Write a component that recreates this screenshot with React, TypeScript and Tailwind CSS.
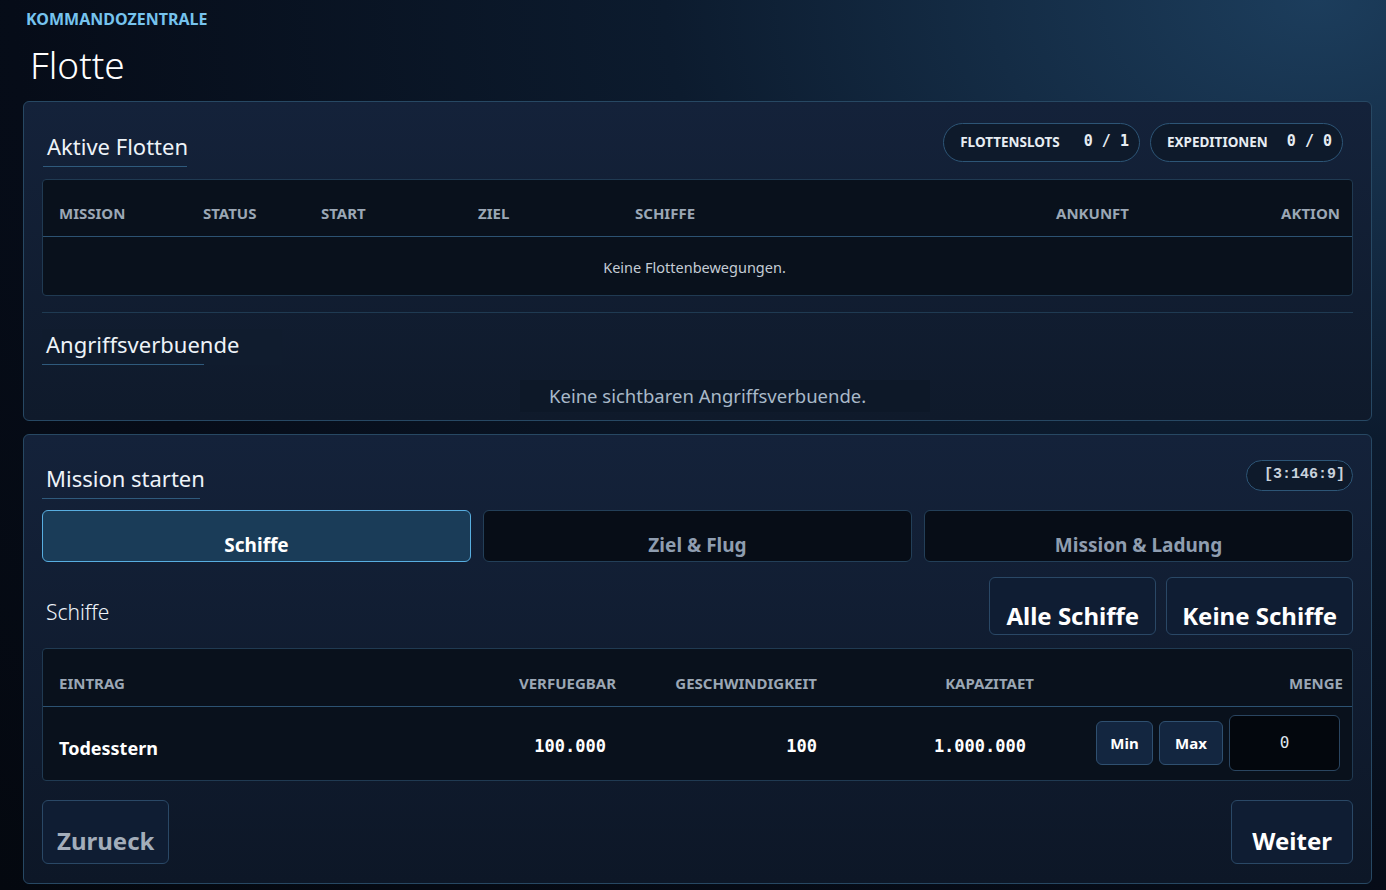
import React from "react";

const sans = "font-['Noto_Sans','Open_Sans',sans-serif]";
const mono = "font-['DejaVu_Sans_Mono','Liberation_Mono',monospace]";

const fleetCols = [
  { label: "MISSION", w: "w-[144px]" },
  { label: "STATUS", w: "w-[118px]" },
  { label: "START", w: "w-[157px]" },
  { label: "ZIEL", w: "w-[157px]" },
  { label: "SCHIFFE", w: "w-[421px]" },
  { label: "ANKUNFT", w: "flex-1" },
];

const SectionTitle = ({ children, line }: { children: React.ReactNode; line: string }) => (
  <div className="inline-block">
    <h2 className="px-1 text-[22px] leading-[30px] text-[#eef3f8]">{children}</h2>
    <div className={`mt-[5px] h-px bg-[#2f5a7c] ${line}`} />
  </div>
);

const Pill = ({ label, value, gap }: { label: string; value: string; gap: string }) => (
  <div className={`flex h-[39px] items-center rounded-full border border-[#2d5576] bg-[#0e1a2b] pl-[16px] pr-[10px] ${gap}`}>
    <span className="text-[13.5px] font-bold text-[#e7edf3]">{label}</span>
    <span className={`${mono} pb-[2px] text-[15px] font-bold text-[#e7edf3]`}>{value}</span>
  </div>
);

export default function App() {
  return (
    <div
      className={`${sans} min-h-screen w-full bg-[radial-gradient(ellipse_at_95%_0%,#1c3d5c_0%,#0c1b2e_35%,#060c18_70%,#04080f_100%)] pb-[6px] pl-[23px] pr-[14px] pt-[9px]`}
    >
      <div className="pl-[3px] text-[16px] font-bold leading-[20px] text-[#76c3ee]">KOMMANDOZENTRALE</div>
      <h1 className="pl-[7px] pt-[14px] text-[37px] font-light leading-[44px] text-white">Flotte</h1>

      <section className="mt-[14px] rounded-md border border-[#274863] bg-[linear-gradient(180deg,#14223a,#0f1a2b)] px-[18px] pb-[8px] pt-[21px]">
        <div className="flex items-start justify-between pl-[1px]">
          <div className="pt-[8px]">
            <SectionTitle line="w-[144px]">Aktive Flotten</SectionTitle>
          </div>
          <div className="flex gap-[10px] pr-[10px]">
            <Pill label="FLOTTENSLOTS" value="0 / 1" gap="gap-[24px]" />
            <Pill label="EXPEDITIONEN" value="0 / 0" gap="gap-[19px]" />
          </div>
        </div>

        <div className="mt-[12px] rounded-sm border border-[#203a52] bg-[#09111c]">
          <div className="flex h-[57px] items-center border-b border-[#2c5272] pl-[16px] pr-[12px] pt-[11px] text-[15px] font-bold text-[#9ba7b5]">
            {fleetCols.map((c) => (
              <div key={c.label} className={c.w}>{c.label}</div>
            ))}
            <div>AKTION</div>
          </div>
          <div className="flex h-[58px] items-center justify-center pr-[6px] pt-[4px] text-[14.5px] text-[#c4ccd5]">
            Keine Flottenbewegungen.
          </div>
        </div>

        <div className="mt-[16px] h-px bg-[#1f3a52]" />

        <div className="mt-[16px] w-[240px] bg-[#101c2e]">
          <SectionTitle line="w-[162px]">Angriffsverbuende</SectionTitle>
        </div>
        <div className="mt-[15px] flex justify-center">
          <div className="ml-[55px] w-[410px] bg-[#0d1828] py-[2px] pl-[29px] text-[18.5px] text-[#a9b9c9]">
            Keine sichtbaren Angriffsverbuende.
          </div>
        </div>
      </section>

      <section className="mt-[13px] rounded-md border border-[#274863] bg-[linear-gradient(180deg,#14223a,#0d1727)] px-[18px] pb-[19px] pt-[26px]">
        <div className="flex items-start justify-between">
          <div className="pt-[2px]">
            <SectionTitle line="w-[158px]">Mission starten</SectionTitle>
          </div>
          <div className="-mt-[1px] flex h-[31px] items-center rounded-full border border-[#2d5576] bg-[#0e1a2b] pl-[17px] pr-[7px] font-['Liberation_Mono',monospace] text-[15px] font-bold text-[#c9d2dc]">
            [3:146:9]
          </div>
        </div>

        <div className="mt-[11px] grid grid-cols-3 gap-[12px]">
          <div className="flex h-[52px] items-end justify-center rounded-md border border-[#58aee0] bg-[#1a3c58] pb-[1px] text-[19px] font-bold text-white">
            Schiffe
          </div>
          <div className="flex h-[52px] items-end justify-center rounded-md border border-[#233f58] bg-[#070d17] pb-[1px] text-[19px] font-bold text-[#8f9db0]">
            Ziel &amp; Flug
          </div>
          <div className="flex h-[52px] items-end justify-center rounded-md border border-[#233f58] bg-[#070d17] pb-[1px] text-[19px] font-bold text-[#8f9db0]">
            Mission &amp; Ladung
          </div>
        </div>

        <div className="mt-[15px] flex items-center justify-between">
          <div className="pl-[4px] pt-[14px] text-[21px] font-light text-[#eef3f8]">Schiffe</div>
          <div className="flex gap-[10px]">
            <button className="flex h-[58px] items-end rounded-md border border-[#2a4866] bg-[#0f1d33] px-[16px] text-[24px] font-bold text-white">
              Alle Schiffe
            </button>
            <button className="flex h-[58px] items-end rounded-md border border-[#2a4866] bg-[#0f1d33] px-[15px] text-[24px] font-bold text-white">
              Keine Schiffe
            </button>
          </div>
        </div>

        <div className="mt-[13px] rounded-sm border border-[#203a52] bg-[#09111c]">
          <div className="flex h-[58px] items-center border-b border-[#2c5272] pl-[16px] pr-[9px] pt-[11px] text-[15px] font-bold text-[#9ba7b5]">
            <div className="flex-1">EINTRAG</div>
            <div className="w-[120px] text-right">VERFUEGBAR</div>
            <div className="w-[201px] text-right">GESCHWINDIGKEIT</div>
            <div className="w-[217px] text-right">KAPAZITAET</div>
            <div className="w-[309px] text-right">MENGE</div>
          </div>
          <div className="flex h-[73px] items-center pl-[16px] pr-[12px]">
            <div className="flex-1 pt-[11px] text-[18px] font-bold text-white">Todesstern</div>
            <div className={`${mono} w-[120px] pt-[6px] text-right text-[17px] font-bold text-white`}>100.000</div>
            <div className={`${mono} w-[211px] pt-[6px] text-right text-[17px] font-bold text-white`}>100</div>
            <div className={`${mono} w-[209px] pt-[6px] text-right text-[17px] font-bold text-white`}>1.000.000</div>
            <div className="flex w-[314px] items-center justify-end gap-[6px]">
              <button className="h-[44px] w-[57px] rounded-md border border-[#2f5070] bg-[#132640] text-[15px] font-bold text-white">Min</button>
              <button className="h-[44px] w-[64px] rounded-md border border-[#2f5070] bg-[#132640] text-[15px] font-bold text-white">Max</button>
              <div className={`${mono} flex h-[56px] w-[111px] items-center justify-center rounded-md border border-[#2a4560] bg-[#03070d] text-[16px] text-[#dfe5ec]`}>
                0
              </div>
            </div>
          </div>
        </div>

        <div className="mt-[19px] flex justify-between">
          <button className="flex h-[64px] items-end rounded-md border border-[#2a4866] bg-[#0f1d33] px-[14px] pb-[4px] text-[24px] font-bold text-[#a3adba]">
            Zurueck
          </button>
          <button className="flex h-[64px] items-end rounded-md border border-[#2a4866] bg-[#0f1d33] px-[20px] pb-[4px] text-[24px] font-bold text-white">
            Weiter
          </button>
        </div>
      </section>
    </div>
  );
}
